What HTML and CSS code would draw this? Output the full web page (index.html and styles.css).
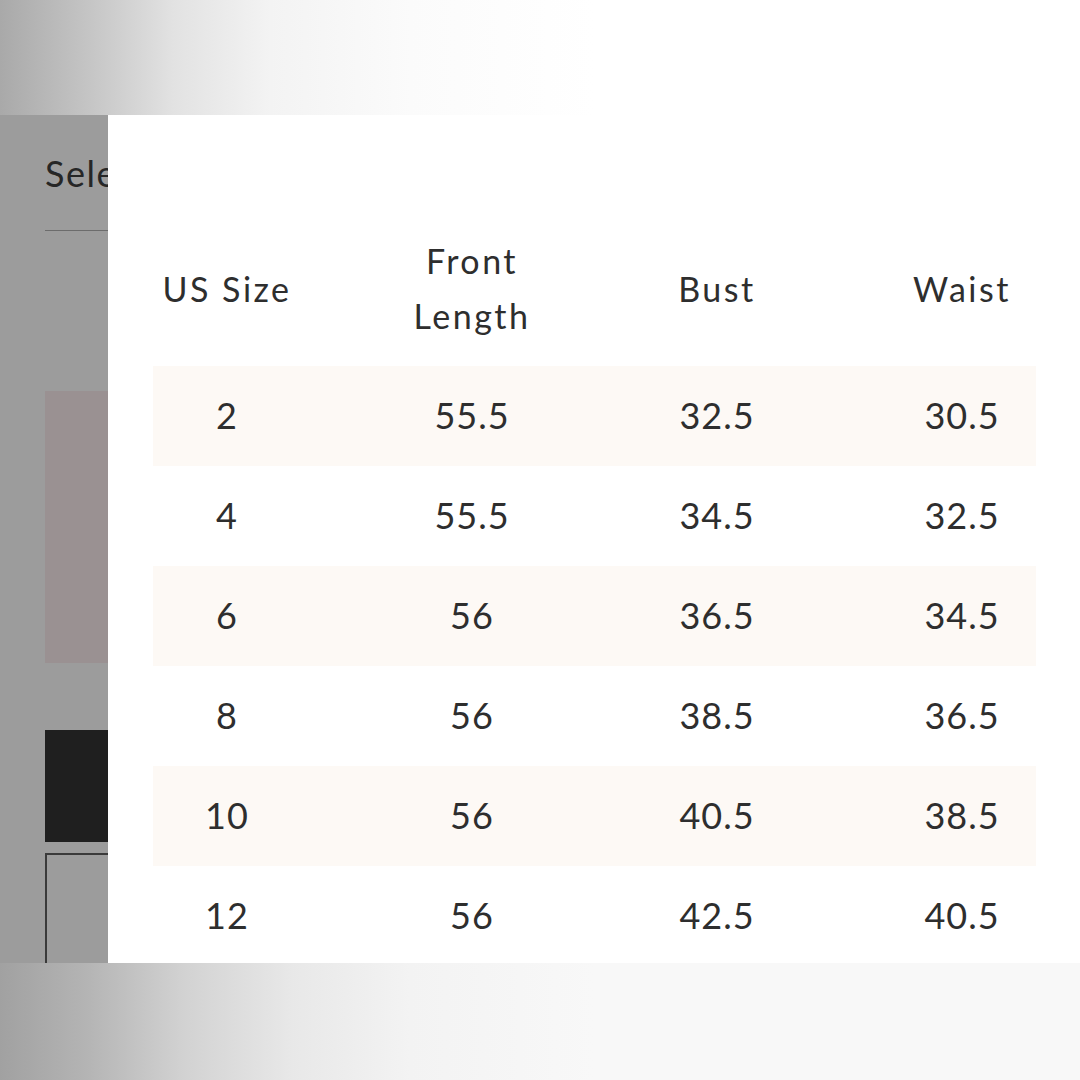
FILE: index.html
```html
<!DOCTYPE html>
<html lang="en">
<head>
<meta charset="utf-8">
<title>Size Chart</title>
<link rel="stylesheet" href="styles.css">
</head>
<body>
<div class="page">
  <div class="band band-top"></div>
  <div class="stage">
    <div class="behind">
      <div class="select-label">Select Size</div>
      <div class="rule"></div>
      <div class="swatch"></div>
      <div class="btn-dark"></div>
      <div class="btn-outline"></div>
    </div>
    <div class="modal">
      <div class="chart">
        <div class="row head">
          <div class="cell">US Size</div>
          <div class="cell">Front<br>Length</div>
          <div class="cell">Bust</div>
          <div class="cell">Waist</div>
        </div>
        <div class="row alt"><div class="cell">2</div><div class="cell">55.5</div><div class="cell">32.5</div><div class="cell">30.5</div></div>
        <div class="row"><div class="cell">4</div><div class="cell">55.5</div><div class="cell">34.5</div><div class="cell">32.5</div></div>
        <div class="row alt"><div class="cell">6</div><div class="cell">56</div><div class="cell">36.5</div><div class="cell">34.5</div></div>
        <div class="row"><div class="cell">8</div><div class="cell">56</div><div class="cell">38.5</div><div class="cell">36.5</div></div>
        <div class="row alt"><div class="cell">10</div><div class="cell">56</div><div class="cell">40.5</div><div class="cell">38.5</div></div>
        <div class="row"><div class="cell">12</div><div class="cell">56</div><div class="cell">42.5</div><div class="cell">40.5</div></div>
      </div>
    </div>
  </div>
  <div class="band band-bottom"></div>
</div>
</body>
</html>
```

FILE: styles.css
```css
html, body {
  margin: 0;
  padding: 0;
}
body {
  width: 1080px;
  height: 1080px;
  overflow: hidden;
  font-family: Lato, "Noto Sans", sans-serif;
  color: #2e2e2e;
}
.page {
  display: flex;
  flex-direction: column;
  width: 1080px;
  height: 1080px;
}
.band {
  flex: none;
}
.band-top {
  height: 115px;
  background: linear-gradient(to right, #a9a9a9 0%, #c4c4c4 8%, #e2e2e2 16%, #f3f3f3 25%, #fbfbfb 38%, #ffffff 55%);
}
.band-bottom {
  height: 117px;
  background: linear-gradient(to right, #a1a1a1 0%, #b4b4b4 8%, #d2d2d2 17%, #e8e8e8 27%, #f3f3f3 38%, #f8f8f8 55%, #f8f8f8 100%);
}
.stage {
  position: relative;
  height: 848px;
  background: #9c9c9c;
  overflow: hidden;
}
.behind {
  display: flex;
  flex-direction: column;
  padding-left: 45px;
  width: 500px;
}
.select-label {
  margin-top: 40px;
  height: 36px;
  font-size: 36px;
  line-height: 36px;
  color: #262626;
  letter-spacing: 1.5px;
  white-space: nowrap;
}
.rule {
  margin-top: 39px;
  height: 1px;
  background: #6c6c6c;
}
.swatch {
  margin-top: 160px;
  height: 272px;
  background: #9a9192;
}
.btn-dark {
  margin-top: 67px;
  height: 112px;
  background: #1f1f1f;
}
.btn-outline {
  margin-top: 11px;
  height: 200px;
  border: 2px solid #3a3a3a;
  box-sizing: border-box;
}
.modal {
  position: absolute;
  left: 108px;
  top: 0;
  right: 0;
  bottom: 0;
  background: #ffffff;
  padding: 118px 0 0 45px;
  overflow: hidden;
}
.chart {
  width: 883px;
  display: flex;
  flex-direction: column;
}
.row {
  display: grid;
  grid-template-columns: repeat(4, 148px);
  column-gap: 97px;
  height: 100px;
  align-items: center;
  justify-items: center;
  font-size: 36px;
  letter-spacing: 1px;
}
.row .cell {
  margin-bottom: 3px;
}
.row.head {
  height: 110px;
  margin-bottom: 23px;
  font-size: 34px;
  line-height: 55px;
  letter-spacing: 2.5px;
}
.row.head .cell {
  margin-bottom: 0;
}
.row.alt {
  background: #fdf9f5;
}
.cell {
  text-align: center;
  white-space: nowrap;
}
```
